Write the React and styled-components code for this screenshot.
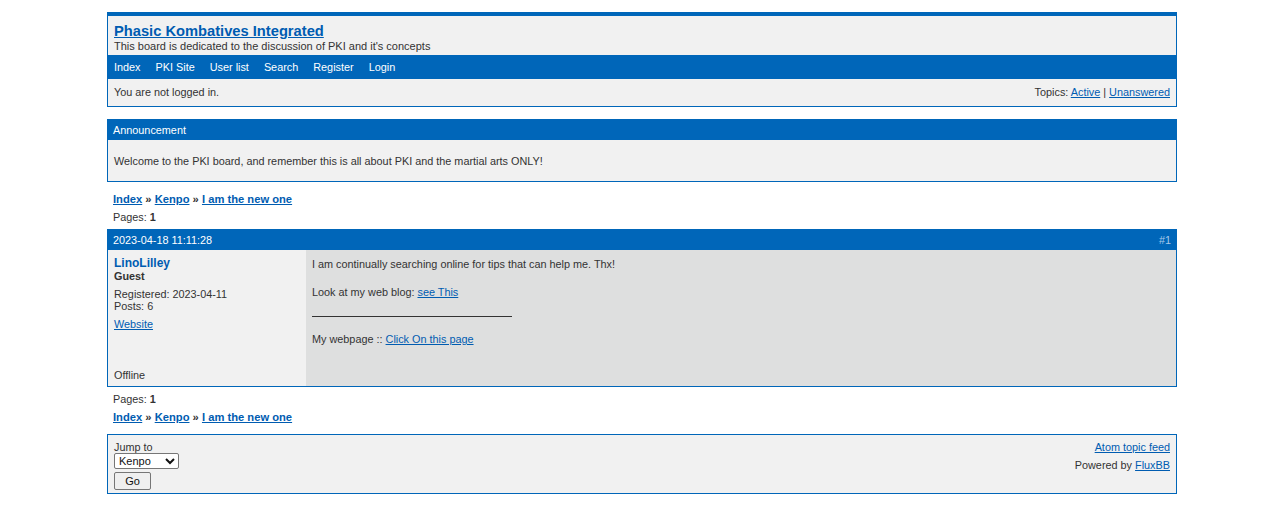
import React from "react";
import styled, { createGlobalStyle } from "styled-components";

const Global = createGlobalStyle`
  html, body { margin: 0; padding: 0; background: #fff; }
  body {
    font-family: "Liberation Sans", Arial, sans-serif;
    font-size: 10.85px;
    color: #333;
  }
`;

const BLUE = "#0066b9";
const LINK = "#005cb1";

const Wrapper = styled.div`
  width: 1070px;
  margin: 12px auto 0;
`;

const Box = styled.div`
  border: 1px solid ${BLUE};
  border-top-width: ${(p) => (p.$thick ? "4px" : "1px")};
  background: #f1f1f1;
  margin-top: ${(p) => p.$mt || 0}px;
  margin-bottom: ${(p) => p.$mb || 0}px;
`;

const A = styled.a`
  color: ${LINK};
  text-decoration: underline;
  cursor: pointer;
`;

const TitleBlock = styled.div`
  padding: 7px 6px 2px;
`;

const Title = styled.h1`
  margin: 0;
  font-size: 14.7px;
  line-height: 17px;
  font-weight: bold;
  a { color: ${LINK}; }
`;

const Desc = styled.div`
  font-size: 11px;
  line-height: 13px;
`;

const Nav = styled.ul`
  display: flex;
  gap: 15px;
  margin: 0;
  padding: 0 6px;
  list-style: none;
  background: ${BLUE};
  height: 24px;
  align-items: center;
  li { color: #fff; }
`;

const StatusBar = styled.div`
  display: flex;
  justify-content: space-between;
  align-items: center;
  height: 26px;
  padding: 0 6px 1px;
`;

const HeadBar = styled.div`
  display: flex;
  justify-content: space-between;
  align-items: center;
  background: ${BLUE};
  color: #fff;
  height: 20px;
  padding: 0 5px 1px;
  box-sizing: border-box;
`;

const Num = styled.span`
  color: #a8c9ea;
`;

const AnnBody = styled.div`
  height: 41px;
  display: flex;
  align-items: center;
  padding: 0 6px;
`;

const Crumbs = styled.div`
  padding: 0 6px;
  height: 18px;
  line-height: 18px;
  font-size: 11.2px;
  font-weight: bold;
  a { color: ${LINK}; }
`;

const PageLine = styled.div`
  padding: 0 6px;
  height: 18px;
  line-height: 18px;
  margin-top: ${(p) => p.$mt || 0}px;
  b { color: #333; }
`;

const PostBody = styled.div`
  display: grid;
  grid-template-columns: 198px 1fr;
  height: 136px;
  background: #dedfdf;
`;

const UserCol = styled.div`
  background: #f1f1f1;
  padding: 6px 6px 5px;
  display: flex;
  flex-direction: column;
`;

const UserName = styled.div`
  font-size: 12px;
  font-weight: bold;
  line-height: 14px;
  color: ${LINK};
`;

const UserTitle = styled.div`
  font-weight: bold;
  line-height: 13px;
`;

const UserInfo = styled.div`
  margin-top: ${(p) => p.$mt || 0}px;
  line-height: 12px;
`;

const Offline = styled.div`
  margin-top: auto;
`;

const Message = styled.div`
  padding: 8px 6px;
  p { margin: 0 0 15px; line-height: 13px; }
`;

const Sig = styled.div`
  border-top: 1px solid #333;
  width: 200px;
  margin: 17px 0 16px;
`;

const FootBox = styled.div`
  display: flex;
  justify-content: space-between;
  padding: 7px 6px 2px;
  height: 49px;
`;

const JumpCol = styled.div`
  display: flex;
  flex-direction: column;
  align-items: flex-start;
  label { line-height: 11px; }
`;

const Select = styled.select`
  font-family: "Liberation Sans", Arial, sans-serif;
  font-size: 11px;
  height: 16px;
  width: 65px;
  padding: 0;
  border: 1px solid #767676;
  border-radius: 2px;
  background: #fff;
  color: #111;
`;

const Go = styled.button`
  margin-top: 3px;
  font-family: "Liberation Sans", Arial, sans-serif;
  font-size: 11px;
  height: 18px;
  width: 37px;
  padding: 0;
  border: 1px solid #767676;
  border-radius: 2px;
  background: #efefef;
  color: #111;
`;

const RightCol = styled.div`
  text-align: right;
  line-height: 18px;
  margin-top: -4px;
`;

const Trail = () => (
  <>
    <A>Index</A> » <A>Kenpo</A> » <A>I am the new one</A>
  </>
);

export default function App() {
  return (
    <>
      <Global />
      <Wrapper>
        <Box $thick $mb={12}>
          <TitleBlock>
            <Title><A>Phasic Kombatives Integrated</A></Title>
            <Desc>This board is dedicated to the discussion of PKI and it's concepts</Desc>
          </TitleBlock>
          <Nav>
            <li>Index</li>
            <li>PKI Site</li>
            <li>User list</li>
            <li>Search</li>
            <li>Register</li>
            <li>Login</li>
          </Nav>
          <StatusBar>
            <span>You are not logged in.</span>
            <span>Topics: <A>Active</A> | <A>Unanswered</A></span>
          </StatusBar>
        </Box>

        <Box $mb={8}>
          <HeadBar><span>Announcement</span></HeadBar>
          <AnnBody>Welcome to the PKI board, and remember this is all about PKI and the martial arts ONLY!</AnnBody>
        </Box>

        <Crumbs><Trail /></Crumbs>
        <PageLine>Pages: <b>1</b></PageLine>

        <Box $mt={3}>
          <HeadBar><span>2023-04-18 11:11:28</span><Num>#1</Num></HeadBar>
          <PostBody>
            <UserCol>
              <UserName>LinoLilley</UserName>
              <UserTitle>Guest</UserTitle>
              <UserInfo $mt={5}>Registered: 2023-04-11<br />Posts: 6</UserInfo>
              <UserInfo $mt={6}><A>Website</A></UserInfo>
              <Offline>Offline</Offline>
            </UserCol>
            <Message>
              <p>I am continually searching online for tips that can help me. Thx!</p>
              <p>Look at my web blog: <A>see This</A></p>
              <Sig />
              <p>My webpage :: <A>Click On this page</A></p>
            </Message>
          </PostBody>
        </Box>

        <PageLine $mt={3}>Pages: <b>1</b></PageLine>
        <Crumbs><Trail /></Crumbs>

        <Box $mt={8}>
          <FootBox>
            <JumpCol>
              <label>Jump to</label>
              <Select defaultValue="Kenpo"><option>Kenpo</option></Select>
              <Go>Go</Go>
            </JumpCol>
            <RightCol>
              <div><A>Atom topic feed</A></div>
              <div>Powered by <A>FluxBB</A></div>
            </RightCol>
          </FootBox>
        </Box>
      </Wrapper>
    </>
  );
}
